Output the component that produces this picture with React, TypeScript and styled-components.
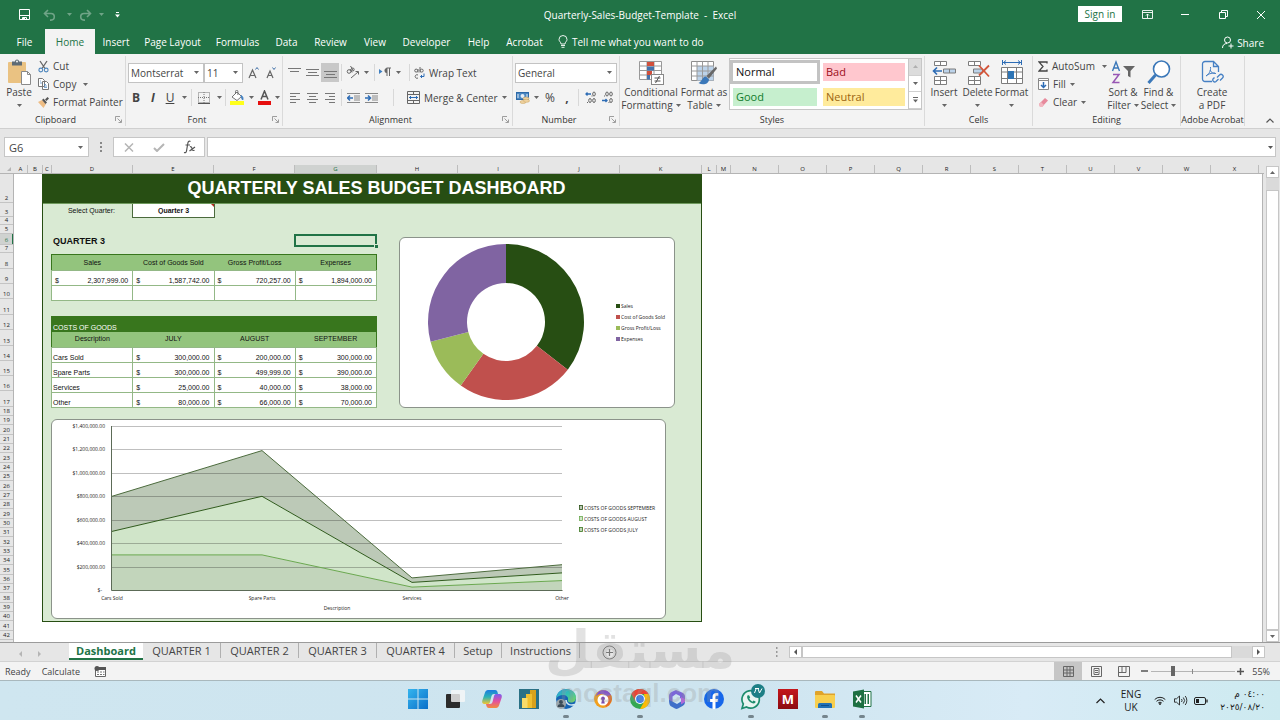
import React from "react";
import styled, { createGlobalStyle, css } from "styled-components";

const GlobalStyle = createGlobalStyle`
  *, *::before, *::after { box-sizing: border-box; }
  body { margin: 0; font-family: "Open Sans", "Noto Sans", sans-serif; font-size: 10px; color: #444; }
  button, input, select { font: inherit; color: inherit; margin: 0; padding: 0; border: 0; background: none; border-radius: 0; }
  svg { display: block; flex: none; }
  h1, h2 { margin: 0; }
`;

const App_ = styled.div`
  display: flex;
  flex-direction: column;
  min-height: 100vh;
  background: #e6e6e6;
  overflow: hidden;
`;

/* ---------- title bar ---------- */

const TitleBar = styled.header`
  display: grid;
  grid-template-columns: 1fr auto 1fr;
  align-items: center;
  height: 29px;
  background: #217346;
  color: #fff;
`;
const QuickAccess = styled.div`
  display: flex;
  align-items: center;
  padding-left: 18px;
`;
const WindowButtons = styled.div`
  display: flex;
  align-items: center;
  justify-content: flex-end;
  height: 29px;
`;
const PlainButton = styled.button<{ $w: number; $dim?: boolean }>`
  display: flex;
  align-items: center;
  justify-content: center;
  width: ${(p) => p.$w}px;
  height: 19px;
  flex: none;
  opacity: ${(p) => (p.$dim ? 0.35 : 1)};
`;
const SignIn = styled.button`
  width: 44px;
  height: 16px;
  margin-right: 6px;
  margin-bottom: 2px;
  background: #fff;
  color: #217346;
  line-height: 14px;
`;

const MenuBar = styled.nav`
  display: flex;
  align-items: stretch;
  height: 25px;
  padding-left: 4px;
  background: #217346;
  color: #fff;
`;
const MenuTab = styled.button<{ $w: number; $active?: boolean }>`
  width: ${(p) => p.$w}px;
  flex: none;
  white-space: nowrap;
  text-align: center;
  line-height: 24px;
  ${(p) => p.$active && css`background: #f3f3f3; color: #217346;`}
`;
const TellMe = styled.button`
  display: flex;
  align-items: center;
  gap: 4px;
  margin-left: 8px;
  white-space: nowrap;
`;
const Share = styled.button`
  display: flex;
  align-items: center;
  gap: 3px;
  margin: 2px 16px 0 auto;
`;

/* ---------- ribbon ---------- */

const Ribbon = styled.div`
  display: flex;
  height: 75px;
  background: #f3f3f3;
  border-bottom: 1px solid #cfcfcf;
`;
const Group = styled.section<{ $w: number; $grow?: boolean }>`
  display: flex;
  flex-direction: column;
  flex: ${(p) => (p.$grow ? 1 : 0)} 0 ${(p) => p.$w}px;
  margin: 2px 0;
  border-right: 1px solid #dadada;
`;
const GroupBody = styled.div<{ $left?: number; $gap?: number }>`
  display: flex;
  height: 58px;
  padding: 1px 0 0 ${(p) => p.$left ?? 0}px;
  gap: ${(p) => p.$gap ?? 0}px;
`;
const GroupFoot = styled.div`
  display: flex;
  align-items: center;
  height: 13px;
  font-size: 9px;
  color: #333;
`;
const GroupLabel = styled.span`
  flex: 1;
  text-align: center;
  white-space: nowrap;
`;
const Launcher = styled.button`
  width: 14px;
  height: 12px;
  display: flex;
  align-items: center;
  justify-content: center;
`;
const Stack = styled.div<{ $w?: number }>`
  display: flex;
  flex-direction: column;
  ${(p) => p.$w && `width: ${p.$w}px;`}
`;
const StackButton = styled.button`
  display: flex;
  align-items: center;
  height: 18px;
  gap: 4px;
  white-space: nowrap;
`;
const BigButton = styled.button<{ $w: number }>`
  display: flex;
  flex-direction: column;
  align-items: center;
  width: ${(p) => p.$w}px;
  flex: none;
  padding-top: 2px;
  line-height: 13px;
  white-space: nowrap;
`;
const BigIcon = styled.span`
  display: flex;
  align-items: center;
  height: 27px;
`;
const BigLine = styled.span`
  display: flex;
  align-items: center;
  gap: 3px;
  height: 13px;
`;
const Rows = styled.div`
  display: flex;
  flex-direction: column;
  gap: 6px;
  padding-top: 6px;
`;
const Row = styled.div`
  display: flex;
  align-items: center;
  height: 19px;
`;
const Tool = styled.button<{ $w: number; $on?: boolean }>`
  display: flex;
  align-items: center;
  justify-content: center;
  width: ${(p) => p.$w}px;
  height: 19px;
  flex: none;
  font-size: 12px;
  background: ${(p) => (p.$on ? "#c8c8c8" : "transparent")};
`;
const TextTool = styled.button`
  display: flex;
  align-items: center;
  height: 19px;
  gap: 4px;
  white-space: nowrap;
`;
const Rule = styled.span<{ $m?: number }>`
  width: 1px;
  height: 17px;
  margin: 0 ${(p) => p.$m ?? 3}px;
  background: #d8d8d8;
`;
const ComboBox = styled.label<{ $w: number }>`
  display: flex;
  align-items: center;
  width: ${(p) => p.$w}px;
  height: 20px;
  padding-right: 4px;
  background: #fff;
  border: 1px solid #c3c3c3;
`;
const Combo = styled.select`
  flex: 1;
  min-width: 0;
  height: 18px;
  padding-left: 2px;
  appearance: none;
  outline: none;
`;

const Gallery = styled.div`
  display: grid;
  grid-template-columns: 90px 88px 13px;
  height: 52px;
  margin-top: 1px;
  border: 1px solid #c6c6c6;
  background: #fff;
`;
const GalleryColumn = styled.div`
  display: flex;
  flex-direction: column;
  gap: 1px;
  padding-top: 1px;
`;
const Swatch = styled.button<{ $bg: string; $fg: string; $on?: boolean }>`
  height: 24px;
  padding: 0 0 0 3px;
  text-align: left;
  font-size: 11px;
  line-height: 16px;
  color: ${(p) => p.$fg};
  background: ${(p) => p.$bg} content-box;
  background-clip: padding-box;
  border: 3px solid ${(p) => (p.$on ? "#c3c3c3" : "#fff")};
`;
const GalleryScroll = styled.div`
  display: grid;
  grid-template-rows: 1fr 1fr 1fr;
  border-left: 1px solid #c6c6c6;
`;
const ScrollStep = styled.button<{ $off?: boolean }>`
  display: flex;
  align-items: center;
  justify-content: center;
  background: ${(p) => (p.$off ? "#dcdcdc" : "#fff")};
  border-bottom: 1px solid #d0d0d0;
`;
const Collapse = styled.button`
  display: flex;
  width: 36px;
  align-items: flex-end;
  padding: 0 0 5px 21px;
`;

/* ---------- formula bar ---------- */

const FormulaBar = styled.div`
  display: flex;
  align-items: center;
  height: 36px;
  padding: 0 4px;
`;
const NameBox = styled.div`
  display: flex;
  align-items: center;
  width: 85px;
  height: 20px;
  padding-right: 5px;
  background: #fff;
  border: 1px solid #c6c6c6;
`;
const NameInput = styled.input`
  flex: 1;
  min-width: 0;
  height: 18px;
  padding-left: 4px;
  font-size: 11px;
  outline: none;
`;
const FormulaDots = styled.span`
  display: flex;
  justify-content: center;
  width: 24px;
`;
const FormulaButtons = styled.div`
  display: flex;
  align-items: center;
  width: 92px;
  height: 20px;
  background: #fff;
  border: 1px solid #c6c6c6;
`;
const FormulaField = styled.div`
  display: flex;
  flex: 1;
  align-items: center;
  height: 20px;
  margin-left: 2px;
  padding-right: 2px;
  background: #fff;
  border: 1px solid #c6c6c6;
`;
const FormulaInput = styled.input`
  flex: 1;
  height: 18px;
  outline: none;
`;

/* ---------- sheet ---------- */

const SheetArea = styled.div`
  display: grid;
  grid-template-columns: minmax(0, 1fr) 16px;
  flex: 1;
`;
const Sheet = styled.main`
  display: flex;
  flex-direction: column;
`;
const ColumnHeads = styled.div`
  display: flex;
  height: 9px;
  overflow: hidden;
  border-bottom: 1px solid #b4b4b4;
`;
const ColumnHead = styled.span<{ $w: number; $on?: boolean }>`
  flex: none;
  width: ${(p) => p.$w}px;
  height: 8px;
  font-size: 6px;
  line-height: 8px;
  text-align: center;
  color: ${(p) => (p.$on ? "#217346" : "#222")};
  background: ${(p) => (p.$on ? "#cfd2d0" : "transparent")};
  border-right: 1px solid #bdbdbd;
`;
const Corner = styled.span`
  display: flex;
  width: 14px;
  flex: none;
  align-items: center;
  justify-content: flex-end;
  padding-right: 3px;
`;
const SheetBody = styled.div`
  display: flex;
  flex: 1;
  background: #fff;
  border-right: 1px solid #b4b4b4;
  margin-right: 1px;
`;
const RowHeads = styled.div`
  display: flex;
  flex-direction: column;
  width: 14px;
  flex: none;
  background: #e6e6e6;
  border-right: 1px solid #b4b4b4;
`;
const RowHead = styled.span<{ $h: number; $on?: boolean }>`
  display: flex;
  align-items: flex-end;
  justify-content: center;
  height: ${(p) => p.$h}px;
  font-size: 6px;
  line-height: 7px;
  color: ${(p) => (p.$on ? "#217346" : "#222")};
  background: ${(p) => (p.$on ? "#cfd2d0" : "transparent")};
  border-bottom: 1px solid #c4c4c4;
  ${(p) => p.$on && css`box-shadow: inset -1px 0 #217346;`}
`;

const Dashboard = styled.article`
  width: 660px;
  height: 448px;
  flex: none;
  margin-left: 28px;
  background: #d9ead3;
  border: 1px solid #274e13;
  border-top: 0;
  font-family: "Liberation Sans", Arial, sans-serif;
  font-size: 7px;
  color: #111;
`;
const Banner = styled.h1`
  height: 30px;
  padding-left: 9px;
  background: #274e13;
  border-bottom: 1px solid #6f9a5d;
  color: #fff;
  font-size: 18px;
  line-height: 29px;
  text-align: center;
`;
const Columns = styled.div`
  display: flex;
  gap: 22px;
  padding-left: 8px;
`;
const Left = styled.div`
  width: 326px;
`;
const QuarterPicker = styled.div`
  display: flex;
  height: 14px;
`;
const PickerLabel = styled.label`
  width: 81px;
  text-align: center;
  line-height: 14px;
`;
const PickerCell = styled.div`
  position: relative;
  width: 83px;
  background: #fff;
  border: 1px solid #4b6a3c;
  border-top: 0;
  &::after {
    content: "";
    position: absolute;
    top: 0;
    right: 0;
    border-top: 3px solid #b3261e;
    border-left: 3px solid transparent;
  }
`;
const Picker = styled.select`
  width: 100%;
  height: 13px;
  appearance: none;
  outline: none;
  font-weight: bold;
  text-align: center;
  text-align-last: center;
`;
const QuarterRow = styled.div`
  display: flex;
  align-items: center;
  justify-content: space-between;
  height: 13px;
  margin-top: 16px;
  margin-bottom: 7px;
`;
const QuarterTitle = styled.h2`
  padding-left: 2px;
  font-size: 9px;
  line-height: 12px;
`;
const SelectedCell = styled.div`
  position: relative;
  width: 83px;
  height: 13px;
  border: 2px solid #217346;
  &::after {
    content: "";
    position: absolute;
    right: -3px;
    bottom: -3px;
    width: 4px;
    height: 4px;
    background: #217346;
    border: solid #d9ead3;
    border-width: 1px 0 0 1px;
  }
`;
const Table = styled.table`
  width: 326px;
  table-layout: fixed;
  border-collapse: collapse;
  background: #fff;
  border: 1px solid #38761d;
  & + & { margin-top: 15px; }
`;
const Tr = styled.tr<{ $h: number }>`
  height: ${(p) => p.$h}px;
`;
const Th = styled.th`
  padding: 0;
  font-weight: normal;
  line-height: 8px;
  background: #93c47d;
`;
const Band = styled.th`
  padding: 0 1px;
  font-weight: normal;
  line-height: 8px;
  text-align: left;
  vertical-align: bottom;
  color: #fff;
  background: #38761d;
`;
const Td = styled.td`
  padding: 0 4px 0 3px;
  line-height: 8px;
  vertical-align: bottom;
  border: 1px solid #93b886;
`;
const NameTd = styled(Td)`
  padding: 0 1px;
`;
const Money = styled.span`
  display: flex;
  justify-content: space-between;
`;

const DonutCard = styled.figure`
  width: 276px;
  height: 171px;
  margin: 33px 0 0;
  background: #fff;
  border: 1px solid #8b938a;
  border-radius: 6px;
`;
const AreaCard = styled.figure`
  width: 615px;
  height: 200px;
  margin: 11px 0 0 8px;
  background: #fff;
  border: 1px solid #8b938a;
  border-radius: 6px;
`;
const ChartSvg = styled.svg`
  font-family: "Open Sans", sans-serif;
  font-size: 5px;
  fill: #222;
`;

const VScroll = styled.div`
  display: flex;
  flex-direction: column;
  width: 13px;
  margin: 1px 0 0 2px;
  background: #dadada;
`;
const ScrollButton = styled.button`
  display: flex;
  align-items: center;
  justify-content: center;
  width: 13px;
  height: 12px;
  flex: none;
  background: #fff;
  border: 1px solid #c6c6c6;
`;
const VThumb = styled.div`
  flex: 1;
  margin-top: 12px;
  background: #fff;
  border: 1px solid #c6c6c6;
`;

/* ---------- sheet tabs, status bar ---------- */

const Bottom = styled.footer`
  position: relative;
`;
const SheetTabs = styled.div`
  display: flex;
  height: 19px;
  border-top: 1px solid #9b9b9b;
  font-size: 11px;
`;
const TabNav = styled.div`
  display: flex;
  width: 69px;
  padding: 1px 0 0 11px;
`;
const SheetTab = styled.button<{ $w: number; $active?: boolean }>`
  width: ${(p) => p.$w}px;
  height: 17px;
  flex: none;
  line-height: 15px;
  white-space: nowrap;
  ${(p) =>
    p.$active
      ? css`background: #fff; color: #217346; font-weight: bold; border-bottom: 2px solid #217346;`
      : css`border-right: 1px solid #b0b0b0; height: 15px;`}
`;
const AddSheet = styled.button`
  margin-left: 22px;
  width: 16px;
  height: 18px;
  display: flex;
  align-items: center;
`;
const HScroll = styled.div`
  display: flex;
  align-items: center;
  width: 500px;
  margin-left: auto;
  margin-right: 15px;
`;
const HTrack = styled.div`
  flex: 1;
  height: 12px;
  padding-right: 20px;
  background: #dadada;
`;
const HThumb = styled.div`
  height: 12px;
  background: #fff;
  border: 1px solid #c6c6c6;
`;

const StatusBar = styled.div`
  display: flex;
  align-items: center;
  height: 20px;
  padding: 0 10px 0 5px;
  gap: 11px;
  background: #f3f3f3;
  border-top: 1px solid #d2d2d2;
  border-bottom: 1px solid #a9b8bd;
  font-size: 9px;
`;
const ViewControls = styled.div`
  display: flex;
  align-items: center;
  margin-left: auto;
`;
const ViewButton = styled.button<{ $on?: boolean }>`
  display: flex;
  align-items: center;
  justify-content: center;
  width: 28px;
  height: 18px;
  background: ${(p) => (p.$on ? "#c6c6c6" : "transparent")};
`;
const ZoomSlider = styled.input`
  width: 84px;
  height: 12px;
  appearance: none;
  outline: none;
  background: linear-gradient(#8a8a8a, #8a8a8a) 41px 50% / 1px 5px no-repeat,
    linear-gradient(#b5b5b5, #b5b5b5) 0 50% / 100% 1px no-repeat;
  &::-webkit-slider-thumb {
    appearance: none;
    width: 4px;
    height: 10px;
    background: #666;
  }
`;
const ZoomLevel = styled.span`
  width: 24px;
  text-align: right;
`;

const Watermark = styled.div`
  position: absolute;
  left: 50%;
  top: -22px;
  display: flex;
  flex-direction: column;
  align-items: center;
  width: 156px;
  margin-left: -78px;
  font-family: "DejaVu Sans", sans-serif;
  font-weight: bold;
  color: rgba(150, 150, 150, 0.28);
  pointer-events: none;
`;
const WatermarkArabic = styled.span`
  font-size: 52px;
  line-height: 60px;
`;
const WatermarkLatin = styled.span`
  font-family: "Liberation Sans", sans-serif;
  font-size: 26px;
  line-height: 26px;
`;

/* ---------- Windows taskbar ---------- */

const Taskbar = styled.div`
  display: grid;
  grid-template-columns: 1fr auto 1fr;
  height: 39px;
  background: linear-gradient(90deg, #cfe6f0 0%, #cde4ef 55%, #d8ebf6 80%, #cdeaf0 100%);
  color: #1c1c1c;
`;
const Apps = styled.div`
  display: flex;
  grid-column: 2;
  gap: 1px;
`;
const AppButton = styled.button<{ $running?: boolean }>`
  display: flex;
  flex-direction: column;
  align-items: center;
  justify-content: space-between;
  width: 36px;
  height: 37px;
  padding-top: 8px;
  &::after {
    content: "";
    width: 6px;
    height: 3px;
    border-radius: 2px;
    background: ${(p) => (p.$running ? "#75858d" : "transparent")};
  }
`;
const Tray = styled.div`
  display: flex;
  align-items: center;
  justify-content: flex-end;
  padding-right: 15px;
`;
const Language = styled.button`
  width: 36px;
  line-height: 13px;
  text-align: center;
`;
const TrayIcon = styled.span<{ $w: number }>`
  display: flex;
  justify-content: center;
  width: ${(p) => p.$w}px;
`;
const Clock = styled.time`
  width: 54px;
  font-family: "DejaVu Sans", sans-serif;
  font-size: 9px;
  line-height: 13px;
  text-align: right;
  white-space: nowrap;
`;

/* ---------- icons ---------- */

const Caret = ({ color = "#666", up }: { color?: string; up?: boolean }) => (
  <svg width="5" height="3" viewBox="0 0 5 3">
    <path d={up ? "M0 3h5L2.500 0z" : "M0 0h5L2.500 3z"} fill={color} />
  </svg>
);
const Arrow = ({ w = 12 }: { w?: number }) => (
  <Tool $w={w} aria-label="More options"><Caret /></Tool>
);
const LauncherIcon = () => (
  <Launcher aria-label="Dialog box launcher">
    <svg width="7" height="7" viewBox="0 0 7 7" fill="none" stroke="#888">
      <path d="M.5 5V.5H5M2.500 2.500 6 6M6.500 3.500v3h-3" strokeWidth=".8" />
    </svg>
  </Launcher>
);
const Foot = ({ label, launcher }: { label: string; launcher?: boolean }) => (
  <GroupFoot><GroupLabel>{label}</GroupLabel>{launcher && <LauncherIcon />}</GroupFoot>
);

/* A block of horizontal text lines, each given as [x, length]. */
const Lines = ({ rows, top = 0 }: { rows: [number, number][]; top?: number }) => (
  <svg width="13" height="12" viewBox="0 0 13 12" stroke="#777">
    {rows.map(([x, w], i) => <path key={i} d={`M${x} ${top + i * 3 + 1.5}h${w}`} strokeWidth="1" />)}
  </svg>
);

const PasteIcon = () => (
  <svg width="24" height="27" viewBox="0 0 24 27">
    <rect x="1" y="3" width="18" height="21" rx="1" fill="#eac282" />
    <path d="M5 2.500h3a2 2 0 0 1 4 0h3v4H5z" fill="#5e6b75" />
    <circle cx="10" cy="2.500" r="1" fill="#f3f3f3" />
    <path d="M14.500 12.500h6l3 3v10h-9z" fill="#fff" stroke="#8a8a8a" />
    <path d="M20.500 12.500v3h3" fill="none" stroke="#8a8a8a" />
  </svg>
);
const CutIcon = () => (
  <svg width="11" height="13" viewBox="0 0 11 13" fill="none">
    <path d="M2 1l5 7.500M9 1L4 8.500" stroke="#666" strokeWidth="1.300" />
    <circle cx="2.800" cy="10" r="1.900" stroke="#4f87bd" strokeWidth="1.100" />
    <circle cx="8.200" cy="10" r="1.900" stroke="#4f87bd" strokeWidth="1.100" />
  </svg>
);
const CopyIcon = () => (
  <svg width="11" height="12" viewBox="0 0 11 12" fill="#fff" stroke="#777">
    <path d="M.5.5h4l2 2v6h-6zM4.500 3.500h4l2 2v6h-6z" />
    <path d="M6 6.500h2M6 8h3M6 9.500h3M2 3h1M2 5h2" stroke="#5b8fc4" strokeWidth=".8" />
  </svg>
);
const PainterIcon = () => (
  <svg width="11" height="11" viewBox="0 0 11 11">
    <path d="M0 5l4-2 4 4-2.500 4z" fill="#eebd85" />
    <path d="M4 3l1.500-1.500L9 5.500 7.500 7z" fill="#555" />
    <path d="M7 2.500L9.500 0 11 1.500 8.500 4z" fill="#555" />
  </svg>
);
const BordersIcon = () => (
  <svg width="12" height="12" viewBox="0 0 12 12" fill="none" stroke="#777">
    <path d="M.5.5h11v10H.5zM6 0v11M0 5.500h12" strokeDasharray="1 1" />
    <path d="M0 11.500h12" stroke="#555" />
  </svg>
);
const FillIcon = () => (
  <svg width="14" height="15" viewBox="0 0 14 15">
    <path d="M2 7l5-5 4.500 4.500L7 10.500z" fill="#fff" stroke="#666" strokeWidth=".9" />
    <path d="M5.500 4V1.500a1.200 1.200 0 0 1 2.400 0V5" fill="none" stroke="#666" strokeWidth=".9" />
    <path d="M11 5.500c2 1 2.200 2.500 1.800 4.500-.8-.5-1.300-2-1.800-4.500z" fill="#3f7fc1" stroke="#3f7fc1" />
    <rect x="0" y="11" width="14" height="4" fill="#ffff1a" />
  </svg>
);
const FontColorIcon = () => (
  <svg width="13" height="15" viewBox="0 0 13 15">
    <path d="M3 9.500L6.500 1 10 9.500M4.200 6.500h4.600" fill="none" stroke="#555" strokeWidth="1.500" />
    <rect x="0" y="11" width="13" height="4" fill="#e60f0f" />
  </svg>
);
const GrowIcon = ({ up }: { up?: boolean }) => (
  <svg width="12" height="14" viewBox="0 0 12 14" fill="none">
    <path d={up ? "M1 12L4.500 4 8 12M2.200 9.500h4.600" : "M2 12l3-7 3 7M3 9.500h4"} stroke="#666" strokeWidth="1.200" />
    <path d={up ? "M7.500 3.500l1.500-2 1.500 2" : "M7.500 1.500l1.500 2 1.500-2"} stroke="#3f6fa8" strokeWidth="1" />
  </svg>
);
const OrientIcon = () => (
  <svg width="14" height="13" viewBox="0 0 14 13" fill="none" stroke="#666">
    <circle cx="3" cy="5.500" r="1.800" /><path d="M4 3l2 3.500" />
    <circle cx="6.700" cy="3.500" r="1.500" /><path d="M4.500 0l3 5" />
    <path d="M5 12l7-6M9.500 5.500H12.500V8.500" />
  </svg>
);
const DirectionIcon = () => (
  <svg width="12" height="11" viewBox="0 0 12 11">
    <path d="M0 2l3.500 2.500L0 7z" fill="#3f7fc1" />
    <path d="M7.500 1H12M8 1v8M10.500 1v8" stroke="#666" fill="none" />
    <path d="M8 1a2.400 2.400 0 0 0 0 5z" fill="#666" />
  </svg>
);
const IndentIcon = ({ right }: { right?: boolean }) => (
  <svg width="13" height="12" viewBox="0 0 13 12" fill="none">
    <path d="M0 1.500h13M7 4h6M7 6h6M7 8h6M0 10.500h13" stroke="#888" />
    <path d={right ? "M0 6h5M3 3.500L5.500 6 3 8.500" : "M6 6H1M3 3.500L.5 6 3 8.500"} stroke="#2d6cb5" strokeWidth="1.500" />
  </svg>
);
const WrapIcon = () => (
  <svg width="11" height="12" viewBox="0 0 11 12" fill="none" stroke="#666" strokeWidth="1">
    <circle cx="2.200" cy="3.600" r="1.500" /><path d="M4 2v3.500M6 0v5.500" />
    <circle cx="7.700" cy="3.600" r="1.500" />
    <path d="M4 8a1.800 1.800 0 1 0 0 3" />
    <path d="M10 6.500v3H6.500M8 8L6.500 9.500 8 11" stroke="#2d6cb5" />
  </svg>
);
const MergeIcon = () => (
  <svg width="13" height="13" viewBox="0 0 13 13" fill="none" stroke="#666">
    <path d="M.5.5h12v12H.5zM.5 3.500h12M.5 9.500h12M6.500.5v3M6.500 9.500v3" />
    <path d="M2 6.500h9M4 5L2.500 6.500 4 8M9 5l1.500 1.500L9 8" stroke="#2d6cb5" />
  </svg>
);
const CurrencyIcon = () => (
  <svg width="14" height="13" viewBox="0 0 14 13">
    <rect x=".5" y="1.500" width="12" height="7" fill="#4a86c0" stroke="#2e6aa8" />
    <circle cx="6.500" cy="5" r="2" fill="#e6eef7" /><path d="M2 3v4M11 3v3" stroke="#e6eef7" />
    <ellipse cx="10" cy="7.500" rx="3" ry="1.500" fill="#efd2a0" stroke="#c9a25e" strokeWidth=".5" />
    <ellipse cx="7" cy="11" rx="3" ry="1.500" fill="#efd2a0" stroke="#c9a25e" strokeWidth=".5" />
    <ellipse cx="10.500" cy="9.800" rx="3" ry="1.500" fill="#efd2a0" stroke="#c9a25e" strokeWidth=".5" />
  </svg>
);
const DecimalIcon = ({ less }: { less?: boolean }) => (
  <svg width="11" height="13" viewBox="0 0 11 13" fill="none" stroke="#666">
    <ellipse cx="9" cy="3" rx="1.300" ry="2" />
    {less && <ellipse cx="5" cy="3" rx="1.300" ry="2" />}
    <ellipse cx="9" cy="9.500" rx="1.300" ry="2" />
    {!less && <ellipse cx="5" cy="9.500" rx="1.300" ry="2" />}
    <path d={less ? "M0 9.500h5M3.500 8L5 9.500 3.500 11" : "M6 3H1M2.500 1.500L1 3l1.500 1.500"} stroke="#2d6cb5" strokeWidth="1.300" />
    <path d={less ? "M2 5h1M6.500 11.500h1" : "M6.500 5h1M2 11.500h1"} />
  </svg>
);
const ConditionalIcon = () => (
  <svg width="25" height="24" viewBox="0 0 25 24">
    <path d="M.5.5h22v18H.5zM.5 5h22M.5 9.500h22M.5 14h22M8 .5v18M15 .5v18" fill="#fff" stroke="#999" />
    <path d="M8 1h4v4H8zM8 10h5v4H8z" fill="#d1503c" /><path d="M8 5.500h7v4H8zM8 14h3v4.500H8z" fill="#4472ab" />
    <path d="M12 1h3v4h-3z" fill="#d1503c" />
    <rect x="12.500" y="13.500" width="12" height="10" fill="#fff" stroke="#888" />
    <path d="M15.500 17h6M15.500 20h6M20.500 15l-4 7" stroke="#555" />
  </svg>
);
const TableIcon = () => (
  <svg width="26" height="24" viewBox="0 0 26 24">
    <path d="M.5.5h22v19H.5z" fill="#fff" stroke="#8e8e8e" />
    <path d="M6 5h16.500v14.500H6z" fill="#bcd3ea" />
    <path d="M.5 5h22M.5 10h22M.5 15h22M6 .5v19M11.500.5v19M17 .5v19" stroke="#9a9a9a" fill="none" />
    <path d="M25 5.500L15.500 15l2.500 2.500 8-10z" fill="#686868" />
    <path d="M15 15.500c-4 0-3.500 5-7.500 6.500 4 2.500 10 1.500 10.500-3.500z" fill="#3b78b9" />
  </svg>
);
const CellsIcon = ({ kind }: { kind: "insert" | "delete" | "format" }) => (
  <svg width="24" height="26" viewBox="0 0 24 26" fill="#fff" stroke="#7d7d7d">
    {kind === "format" ? (
      <>
        <path d="M1.500 7.500h21v16h-21zM1.500 12h21M1.500 18.500h21M7.500 7.500v16M16.500 7.500v16" />
        <path d="M8 11h6v8H8z" fill="#2f75b5" stroke="none" />
        <path d="M3 2.500h18M6 .5L3.500 2.500 6 4.500M18 .5l2.500 2L18 4.500M2.500 0v5M21.500 0v5" stroke="#2d6cb5" fill="none" />
      </>
    ) : (
      <>
        <path d="M2.500 1.500h12v4h-12zM8.500 1.500v4M2.500 16.500h12v8h-12zM8.500 16.500v8M2.500 20.500h12" />
        {kind === "insert" ? (
          <>
            <path d="M11.500 9h12v4h-12zM17.500 9v4" fill="#bcd3ea" />
            <path d="M10 11H2M5 7.500L1.500 11 5 14.500" fill="none" stroke="#2d6cb5" strokeWidth="1.600" />
          </>
        ) : (
          <>
            <path d="M7.500 9h9v4h-9z" fill="#bcd3ea" />
            <path d="M13 5.500l10 11M23 5.500l-10 10" fill="none" stroke="#d2553a" strokeWidth="1.800" />
          </>
        )}
      </>
    )}
  </svg>
);
const SumIcon = () => (
  <svg width="10" height="11" viewBox="0 0 10 11" fill="none" stroke="#444" strokeWidth="1.300">
    <path d="M9 2.500V1H1l4 4.500L1 10h8V8.500" />
  </svg>
);
const FillDownIcon = () => (
  <svg width="11" height="12" viewBox="0 0 11 12" fill="none">
    <path d="M.5.5h10v11H.5zM.5 2.500h10" stroke="#888" fill="#fff" />
    <path d="M5.500 4v5.500M3 7l2.500 2.500L8 7" stroke="#2d6cb5" strokeWidth="1.500" />
  </svg>
);
const EraserIcon = () => (
  <svg width="11" height="11" viewBox="0 0 11 11">
    <path d="M1 7l6-6 3 2.500-6 6.500H2z" fill="#e78a9c" /><path d="M1 7l2-2 3 3-2 2H2z" fill="#f2b6c0" />
  </svg>
);
const SortIcon = () => (
  <svg width="25" height="25" viewBox="0 0 25 25" fill="none">
    <path d="M1.500 11L5 2l3.500 9M2.800 8h4.400" stroke="#3b78b9" strokeWidth="1.400" />
    <path d="M2 14.500h6l-6 8h6.500" stroke="#9757b5" strokeWidth="1.500" />
    <path d="M12 6h12l-4.500 5v6.500L17 16v-5z" fill="#666" />
  </svg>
);
const FindIcon = () => (
  <svg width="24" height="25" viewBox="0 0 24 25" fill="none" stroke="#3b78b9">
    <circle cx="14.500" cy="9" r="8" fill="#fff" strokeWidth="1.600" />
    <path d="M8.500 15L1.500 23" strokeWidth="3" />
  </svg>
);
const PdfIcon = () => (
  <svg width="23" height="25" viewBox="0 0 23 25" fill="none" stroke="#4680c4" strokeWidth="1.300">
    <path d="M11 21.500H4a2.500 2.500 0 0 1-2.500-2.500V4A2.500 2.500 0 0 1 4 1.500h8.500L17.500 6.500V12M12.500 1.500v5h5" />
    <path d="M5 16c3-2 5-5 4.500-9M9 10c1 2.500 3 3.500 6 3.500M5 16c2-2 5-3 9-3" strokeWidth="1" />
    <path d="M16 17.500l2.500-2.500a2 2 0 0 1 3 3L19 20.500M17.500 19l-2.500 2.500a2 2 0 0 1-3-2.500l1.500-1.500" />
  </svg>
);

/* ---------- data ---------- */

const columnHeads: [string, number][] = [
  ["A", 14], ["B", 15], ["C", 9], ["D", 81], ["E", 81], ["F", 81], ["G", 82], ["H", 81], ["I", 81],
  ["J", 81], ["K", 82], ["L", 15], ["M", 14],
  ...["N", "O", "P", "Q", "R", "S", "T", "U", "V", "W", "X"].map((c): [string, number] => [c, 48]),
];
const topRows = [29, 14, 8, 9, 11, 8, 16, 15, 15, 16, 15, 16, 15, 15, 15, 16, 9];
const rowHeights = [...topRows, ...Array.from({ length: 24 }, (_, i) => (i % 3 === 1 ? 10 : 9))];

const summary = ["2,307,999.00", "1,587,742.00", "720,257.00", "1,894,000.00"];
const costs: [string, number, number, number][] = [
  ["Cars Sold", 300000, 200000, 300000],
  ["Spare Parts", 300000, 499999, 390000],
  ["Services", 25000, 40000, 38000],
  ["Other", 80000, 66000, 70000],
];
const money = (n: number) => n.toLocaleString("en-US", { minimumFractionDigits: 2 });

const slices: [string, number, string][] = [
  ["Sales", 2307999, "#274e13"],
  ["Cost of Goods Sold", 1587742, "#c0504d"],
  ["Gross Profit/Loss", 720257, "#9bbb59"],
  ["Expenses", 1894000, "#8064a2"],
];

const Donut = () => {
  const cx = 106, cy = 84, R = 78, r = 39;
  const total = slices.reduce((s, x) => s + x[1], 0);
  let acc = 0;
  const at = (f: number, rad: number) => {
    const a = f * 2 * Math.PI;
    return `${(cx + rad * Math.sin(a)).toFixed(2)} ${(cy - rad * Math.cos(a)).toFixed(2)}`;
  };
  return (
    <ChartSvg width="274" height="169" viewBox="0 0 274 169" role="img" aria-label="Share of totals">
      {slices.map(([name, value, color], i) => {
        const from = acc / total;
        acc += value;
        const to = acc / total;
        return (
          <g key={name}>
            <path fill={color} d={`M${at(from, R)}A${R} ${R} 0 0 1 ${at(to, R)}L${at(to, r)}A${r} ${r} 0 0 0 ${at(from, r)}z`} />
            <rect x="216" y={66 + i * 11} width="4" height="4" fill={color} />
            <text x="221" y={70 + i * 11}>{name}</text>
          </g>
        );
      })}
    </ChartSvg>
  );
};

const AreaChart = () => {
  const x = (i: number) => 60 + i * 150;
  const y = (v: number) => 170 - (v / 1400000) * 164;
  const july = costs.map((c) => c[1]);
  const august = costs.map((c) => c[1] + c[2]);
  const september = costs.map((c) => c[1] + c[2] + c[3]);
  const line = (v: number[]) => v.map((n, i) => `${i ? "L" : "M"}${x(i)} ${y(n).toFixed(1)}`).join("");
  const band = (top: number[], base: number[]) =>
    line(top) + [...base].map((n, i) => [n, i]).reverse().map(([n, i]) => `L${x(i)} ${y(n).toFixed(1)}`).join("") + "z";
  const zero = [0, 0, 0, 0];
  const legend: [string, string, string][] = [
    ["COSTS OF GOODS SEPTEMBER", "#bcc9b7", "#274e13"],
    ["COSTS OF GOODS AUGUST", "#d0e5c9", "#6aa84f"],
    ["COSTS OF GOODS JULY", "#c2d5bb", "#38761d"],
  ];
  return (
    <ChartSvg width="613" height="198" viewBox="0 0 613 198" role="img" aria-label="Costs of goods by month">
      <path d={band(september, august)} fill="#bcc9b7" />
      <path d={band(august, july)} fill="#d0e5c9" />
      <path d={band(july, zero)} fill="#c2d5bb" />
      {[0, 1, 2, 3, 4, 5, 6, 7].map((k) => (
        <g key={k}>
          {k > 0 && <path d={`M60 ${Math.round(y(k * 200000)) + 0.5}h450`} stroke="#000" strokeOpacity=".25" />}
          <text x={k ? 53 : 50} y={y(k * 200000) + 2} textAnchor="end">{k ? "$" + money(k * 200000) : "$-"}</text>
        </g>
      ))}
      <path d={line(september)} fill="none" stroke="#4c6b3d" />
      <path d={line(august)} fill="none" stroke="#2f5a1c" />
      <path d={line(july)} fill="none" stroke="#6aa84f" />
      <path d="M59.500 6v164.500h451" fill="none" stroke="#5c6b57" />
      {costs.map((c, i) => <text key={c[0]} x={x(i)} y="180" textAnchor="middle">{c[0]}</text>)}
      <text x="285" y="190" textAnchor="middle">Description</text>
      {legend.map(([name, fill, stroke], i) => (
        <g key={name}>
          <rect x="527.500" y={85.5 + i * 11} width="3" height="4" fill={fill} stroke={stroke} strokeWidth=".8" />
          <text x="532" y={90 + i * 11}>{name}</text>
        </g>
      ))}
    </ChartSvg>
  );
};

/* ---------- taskbar drawings ---------- */

const appIcons: { name: string; running?: boolean; art: React.ReactNode }[] = [
  { name: "Start", art: <g><defs><linearGradient id="win" x1="0" y1="0" x2="1" y2="1"><stop offset="0" stopColor="#35b5ee" /><stop offset="1" stopColor="#0a6fc9" /></linearGradient></defs><path d="M0 0h9.500v9.500H0zM10.500 0H20v9.500h-9.500zM0 10.500h9.500V20H0zM10.500 10.500H20V20h-9.500z" fill="url(#win)" /></g> },
  { name: "Task view", art: <g><rect x="1" y="5" width="14" height="14" rx="1" fill="#2b2b2b" /><rect x="6" y="1" width="14" height="12" rx="1" fill="#f7f7f7" fillOpacity=".8" /></g> },
  { name: "Copilot", art: <g><defs><linearGradient id="cp1" x1="0" y1="0" x2="0" y2="1"><stop offset="0" stopColor="#1b7be0" /><stop offset=".5" stopColor="#2cb3b5" /><stop offset="1" stopColor="#f4c430" /></linearGradient><linearGradient id="cp2" x1="0" y1="0" x2="0" y2="1"><stop offset="0" stopColor="#7a5cf0" /><stop offset=".5" stopColor="#e24fa0" /><stop offset="1" stopColor="#f28b3c" /></linearGradient></defs><path d="M6 1h7c2 0 2.500 1.500 3 4h-4c-1.500 0-2 .7-2.500 2L8 13c-.5 1.500-1 2-2.500 2H2.500C.5 15-.2 13.500.3 11.500L3 3.500C3.500 2 4.500 1 6 1z" fill="url(#cp1)" /><path d="M14 19H7c-2 0-2.500-1.500-3-4h4c1.500 0 2-.7 2.500-2L12 7c.5-1.500 1-2 2.500-2h3c2 0 2.700 1.500 2.200 3.500L17 16.500c-.5 1.500-1.500 2.500-3 2.500z" fill="url(#cp2)" /></g> },
  { name: "Power BI", art: <g><rect width="20" height="20" fill="#2a7185" /><path d="M11 1h6v18h-6z" fill="#d9a21b" /><path d="M7 5h6v14H7z" fill="#f0c02e" /><path d="M3 9h5.500v10H3z" fill="#f7dc6a" /></g> },
  { name: "Edge", running: true, art: <g><defs><linearGradient id="edge" x1="0" y1="0" x2="1" y2="1"><stop offset="0" stopColor="#2a9be0" /><stop offset=".5" stopColor="#35c1b0" /><stop offset="1" stopColor="#7bd858" /></linearGradient></defs><circle cx="10" cy="10" r="10" fill="#1563b4" /><path d="M0 9.500C.5 4 5 0 10 0c6 0 10 4 10 8.500 0 3-2 5-5 5-2.500 0-3.500-1-3-2.500.8-3-2-5-5-5C4 6 1.500 7.500 0 9.500z" fill="url(#edge)" /><path d="M10 11c0 4 4 6 9 4.500" stroke="#d0e6f2" fill="none" strokeWidth="1.500" /><circle cx="5" cy="15" r="5" fill="#9aa4aa" /><circle cx="5" cy="13" r="2" fill="#3a4a55" /><path d="M1.500 18a3.500 3 0 0 1 7 0z" fill="#3a4a55" /></g> },
  { name: "Secure browser", art: <g><circle cx="10" cy="10" r="9" fill="#f2a01e" /><path d="M10 1a9 9 0 0 1 8 5L14 9c-2-5-7-5-11-2 1-4 4-6 7-6z" fill="#8455c7" /><path d="M18 6a9 9 0 0 1-5 12l-1-3c3-2 4-5 2-8z" fill="#e36a2c" /><circle cx="10" cy="11" r="5.500" fill="#fff" /><path d="M10 7.500a2 2 0 0 1 1 3.700l.8 3.300H8.200l.8-3.300a2 2 0 0 1 1-3.700z" fill="#7a4bb0" /></g> },
  { name: "Chrome", running: true, art: <g><circle cx="10" cy="10" r="10" fill="#34a853" /><path d="M1.340 5A10 10 0 0 1 18.660 5H10a5 5 0 0 0-4.330 7.500z" fill="#ea4335" /><path d="M18.660 5A10 10 0 0 1 10 20l4.330-7.500A5 5 0 0 0 14.300 7.500L14 5z" fill="#fbbc04" /><circle cx="10" cy="10" r="5" fill="#fff" /><circle cx="10" cy="10" r="3.900" fill="#3b7ded" /></g> },
  { name: "Microsoft 365", art: <g><path d="M9 1l6 2.500c2 1 3 2 3 4V12l-5-3V7L9 5 5.500 7.500V14L2 12V7c0-2 1-3 2.500-4z" fill="#7b67d8" /><path d="M5.500 12.500L10 15l4-2.500 4-3V13c0 2-1 3-2.500 4L11 19.500c-1 .5-2 .5-3 0L3.500 17C2.500 16 2 14 2 11z" fill="#3f6fc9" /><path d="M14 8l4 2v3l-4 2.500z" fill="#b06ad8" /></g> },
  { name: "Facebook", art: <g><circle cx="10" cy="10" r="10" fill="#1767ea" /><path d="M8.500 20v-7H6v-3h2.500V8c0-2.700 1.500-4 3.800-4 1 0 1.700.1 2 .2v2.500h-1.300c-1.200 0-1.500.6-1.500 1.600V10H14l-.5 3h-2v7z" fill="#fff" /></g> },
  { name: "WhatsApp", running: true, art: <g><path d="M1 19.500l1.300-4.500A8.700 8.700 0 1 1 5.500 18z" fill="#e9f5f1" stroke="#1c8c6c" strokeWidth="1.700" /><path d="M6.500 6.500c-1.500 2 1.500 7.500 6 8 1.500 0 2.300-1.200 2-2l-2-1-1 1.200c-1.500-.5-2.700-1.800-3.200-3.100L9.200 8.500l-1-2c-.5-.5-1.200-.5-1.700 0z" fill="#1c8c6c" /><circle cx="17" cy="2" r="7" fill="#1d7f86" /><path d="M14-.5h4M15 .0l-1.500 4M17-.5l1.500 4.500L21-.5" stroke="#fff" fill="none" strokeWidth="1" /></g> },
  { name: "M", art: <g><defs><linearGradient id="mred" x1="0" y1="0" x2="0" y2="1"><stop offset="0" stopColor="#c4171b" /><stop offset="1" stopColor="#8c0b10" /></linearGradient></defs><rect width="20" height="20" fill="url(#mred)" /><text x="10" y="15" textAnchor="middle" fontSize="13" fontWeight="bold" fill="#fff">M</text></g> },
  { name: "File Explorer", running: true, art: <g><path d="M0 3a1 1 0 0 1 1-1h6l2 2.500H20V10H0z" fill="#e0a32a" /><path d="M0 6h19a1 1 0 0 1 1 1v11a1 1 0 0 1-1 1H1a1 1 0 0 1-1-1z" fill="#f8cf4e" /><path d="M3 19v-3.500A1.500 1.500 0 0 1 4.500 14h11a1.500 1.500 0 0 1 1.500 1.500V19z" fill="#2271b5" /><path d="M6 16.500h8" stroke="#0f4f8c" /></g> },
  { name: "Excel", running: true, art: <g><path d="M10 2.500h9v15h-9z" fill="#fff" stroke="#217346" /><path d="M12.500 5h1.500v10h-1.500zM15.500 5H17v10h-1.500z" fill="#217346" /><path d="M1 2.500L12 .5v19L1 17.500z" fill="#1d6f42" /><path d="M4 6.500l5 7M9 6.500l-5 7" stroke="#fff" strokeWidth="1.500" fill="none" /></g> },
];

const menu: [string, number][] = [
  ["File", 41], ["Home", 50], ["Insert", 42], ["Page Layout", 71], ["Formulas", 59], ["Data", 39],
  ["Review", 49], ["View", 40], ["Developer", 63], ["Help", 41], ["Acrobat", 51],
];

export default function App() {
  return (
    <App_>
      <GlobalStyle />
      <TitleBar>
        <QuickAccess>
          <PlainButton $w={13} aria-label="Save">
            <svg width="11" height="11" viewBox="0 0 11 11" fill="none" stroke="#fff"><path d="M.5.5h10v10H.5zM1 6.500h9M3.500 10.500v-2h4v2" /><path d="M4 9h2v2H4z" fill="#fff" stroke="none" /></svg>
          </PlainButton>
          <PlainButton $w={36} $dim aria-label="Undo">
            <svg width="13" height="12" viewBox="0 0 13 12" fill="none" stroke="#fff" strokeWidth="1.600"><path d="M5 1L1.500 4.500 5 8M2 4.500h6a3.300 3.300 0 0 1 0 6.600H7" /></svg>
          </PlainButton>
          <PlainButton $w={-0 || 5} $dim aria-label="Undo history"><Caret color="#fff" /></PlainButton>
          <PlainButton $w={26} $dim aria-label="Redo">
            <svg width="13" height="12" viewBox="0 0 13 12" fill="none" stroke="#fff" strokeWidth="1.600"><path d="M8 1l3.500 3.500L8 8M11 4.500H5a3.300 3.300 0 0 0 0 6.600h1" /></svg>
          </PlainButton>
          <PlainButton $w={6} $dim aria-label="Redo history"><Caret color="#fff" /></PlainButton>
          <PlainButton $w={26} aria-label="Customize toolbar">
            <svg width="5" height="6" viewBox="0 0 5 6" fill="#fff"><path d="M1 0h3v1H1zM0 2.500h5L2.500 5.500z" /></svg>
          </PlainButton>
        </QuickAccess>
        <span>Quarterly-Sales-Budget-Template&nbsp; -&nbsp; Excel</span>
        <WindowButtons>
          <SignIn>Sign in</SignIn>
          <PlainButton $w={38} aria-label="Ribbon display options">
            <svg width="11" height="9" viewBox="0 0 11 9" fill="none" stroke="#fff"><path d="M.5.5h10v8H.5zM.5 2.500h10M5.500 8V4M4 5.500L5.500 4 7 5.500" strokeWidth=".9" /></svg>
          </PlainButton>
          <PlainButton $w={38} aria-label="Minimize"><svg width="8" height="1"><path d="M0 .5h8" stroke="#fff" /></svg></PlainButton>
          <PlainButton $w={38} aria-label="Restore">
            <svg width="9" height="9" viewBox="0 0 9 9" fill="none" stroke="#fff"><path d="M.5 2.500h6v6h-6zM2.500 2.500v-2h6v6h-2" /></svg>
          </PlainButton>
          <PlainButton $w={38} aria-label="Close">
            <svg width="10" height="10" viewBox="0 0 10 10" stroke="#fff"><path d="M1 1l8 8M9 1L1 9" /></svg>
          </PlainButton>
        </WindowButtons>
      </TitleBar>

      <MenuBar>
        {menu.map(([name, w]) => <MenuTab key={name} $w={w} $active={name === "Home"}>{name}</MenuTab>)}
        <TellMe>
          <svg width="10" height="13" viewBox="0 0 10 13" fill="none" stroke="#fff"><path d="M3 9C3 7 1 6.500 1 4.500a4 4 0 0 1 8 0C9 6.500 7 7 7 9zM3 10.500h4M3.500 12.300h3" strokeWidth=".9" /></svg>
          Tell me what you want to do
        </TellMe>
        <Share>
          <svg width="12" height="13" viewBox="0 0 12 13" fill="none" stroke="#fff"><circle cx="5.500" cy="4" r="3" /><path d="M.5 12c0-3 2-4.500 4.500-4.500M9 7.500v5M6.500 10h5" /></svg>
          Share
        </Share>
      </MenuBar>

      <Ribbon>
        <Group $w={126}>
          <GroupBody>
            <BigButton $w={38}>
              <BigIcon><PasteIcon /></BigIcon><BigLine>Paste</BigLine><BigLine><Caret /></BigLine>
            </BigButton>
            <Stack>
              <StackButton><CutIcon />Cut</StackButton>
              <StackButton><CopyIcon />Copy&nbsp; <Caret /></StackButton>
              <StackButton><PainterIcon />Format Painter</StackButton>
            </Stack>
          </GroupBody>
          <Foot label="Clipboard" launcher />
        </Group>

        <Group $w={156}>
          <GroupBody $left={2}>
            <Rows>
              <Row>
                <ComboBox $w={76}><Combo aria-label="Font"><option>Montserrat</option></Combo><Caret /></ComboBox>
                <ComboBox $w={39}><Combo aria-label="Font size"><option>11</option></Combo><Caret /></ComboBox>
                <Tool $w={22} aria-label="Increase font size"><GrowIcon up /></Tool>
                <Tool $w={12} aria-label="Decrease font size"><GrowIcon /></Tool>
              </Row>
              <Row>
                <Tool $w={16}><b>B</b></Tool>
                <Tool $w={18}><b><i>I</i></b></Tool>
                <Tool $w={16}><u>U</u></Tool>
                <Arrow />
                <Rule $m={1} />
                <Tool $w={22} aria-label="Borders"><BordersIcon /></Tool>
                <Arrow w={8} />
                <Rule $m={2} />
                <Tool $w={18} aria-label="Fill color"><FillIcon /></Tool>
                <Arrow w={10} />
                <Tool $w={16} aria-label="Font color"><FontColorIcon /></Tool>
                <Arrow w={10} />
              </Row>
            </Rows>
          </GroupBody>
          <Foot label="Font" launcher />
        </Group>

        <Group $w={230}>
          <GroupBody $left={2}>
            <Rows>
              <Row>
                <Tool $w={18} aria-label="Top align"><Lines rows={[[0, 13], [2, 9]]} /></Tool>
                <Tool $w={18} aria-label="Middle align"><Lines top={1} rows={[[0, 13], [2, 9], [0, 13]]} /></Tool>
                <Tool $w={18} $on aria-label="Bottom align"><Lines top={3} rows={[[0, 13], [2, 9], [0, 13]]} /></Tool>
                <Rule $m={2} />
                <Tool $w={18} aria-label="Orientation"><OrientIcon /></Tool>
                <Arrow w={8} />
                <Rule $m={4} />
                <Tool $w={12} aria-label="Text direction"><DirectionIcon /></Tool>
                <Arrow w={14} />
                <Rule $m={4} />
                <TextTool><WrapIcon />Wrap Text</TextTool>
              </Row>
              <Row>
                <Tool $w={18} aria-label="Align left"><Lines rows={[[2, 10], [2, 6], [2, 10], [2, 6]]} /></Tool>
                <Tool $w={18} aria-label="Center"><Lines rows={[[1, 11], [3, 7], [1, 11], [3, 7]]} /></Tool>
                <Tool $w={18} aria-label="Align right"><Lines rows={[[1, 10], [5, 6], [1, 10], [5, 6]]} /></Tool>
                <Rule $m={2} />
                <Tool $w={18} aria-label="Decrease indent"><IndentIcon /></Tool>
                <Tool $w={18} aria-label="Increase indent"><IndentIcon right /></Tool>
                <Rule $m={13} />
                <TextTool><MergeIcon />Merge &amp; Center <Caret /></TextTool>
              </Row>
            </Rows>
          </GroupBody>
          <Foot label="Alignment" launcher />
        </Group>

        <Group $w={107}>
          <GroupBody $left={2}>
            <Rows>
              <Row><ComboBox $w={102}><Combo aria-label="Number format"><option>General</option></Combo><Caret /></ComboBox></Row>
              <Row>
                <Tool $w={16} aria-label="Accounting format"><CurrencyIcon /></Tool>
                <Arrow w={10} />
                <Tool $w={18}>%</Tool>
                <Tool $w={16}><b>,</b></Tool>
                <Rule $m={3} />
                <Tool $w={16} aria-label="Increase decimal"><DecimalIcon /></Tool>
                <Tool $w={18} aria-label="Decrease decimal"><DecimalIcon less /></Tool>
              </Row>
            </Rows>
          </GroupBody>
          <Foot label="Number" launcher />
        </Group>

        <Group $w={305} $grow>
          <GroupBody $left={3}>
            <BigButton $w={56}>
              <BigIcon><ConditionalIcon /></BigIcon><BigLine>Conditional</BigLine><BigLine>Formatting <Caret /></BigLine>
            </BigButton>
            <BigButton $w={50}>
              <BigIcon><TableIcon /></BigIcon><BigLine>Format as</BigLine><BigLine>Table <Caret /></BigLine>
            </BigButton>
            <Gallery>
              <GalleryColumn>
                <Swatch $bg="#fff" $fg="#111" $on>Normal</Swatch>
                <Swatch $bg="#c6efce" $fg="#107c2c">Good</Swatch>
              </GalleryColumn>
              <GalleryColumn>
                <Swatch $bg="#ffc7ce" $fg="#9c0f1a">Bad</Swatch>
                <Swatch $bg="#ffeb9c" $fg="#9c6510">Neutral</Swatch>
              </GalleryColumn>
              <GalleryScroll>
                <ScrollStep $off aria-label="Scroll up"><Caret up color="#b0b0b0" /></ScrollStep>
                <ScrollStep aria-label="Scroll down"><Caret /></ScrollStep>
                <ScrollStep aria-label="More styles"><svg width="5" height="6" viewBox="0 0 5 6" fill="#666"><path d="M0 0h5v1H0zM0 2.500h5L2.500 5.500z" /></svg></ScrollStep>
              </GalleryScroll>
            </Gallery>
          </GroupBody>
          <Foot label="Styles" />
        </Group>

        <Group $w={108}>
          <GroupBody $left={2}>
            <BigButton $w={34}><BigIcon><CellsIcon kind="insert" /></BigIcon><BigLine>Insert</BigLine><BigLine><Caret /></BigLine></BigButton>
            <BigButton $w={33}><BigIcon><CellsIcon kind="delete" /></BigIcon><BigLine>Delete</BigLine><BigLine><Caret /></BigLine></BigButton>
            <BigButton $w={35}><BigIcon><CellsIcon kind="format" /></BigIcon><BigLine>Format</BigLine><BigLine><Caret /></BigLine></BigButton>
          </GroupBody>
          <Foot label="Cells" />
        </Group>

        <Group $w={148}>
          <GroupBody $left={5}>
            <Stack $w={67}>
              <StackButton><SumIcon />AutoSum&nbsp; <Caret /></StackButton>
              <StackButton><FillDownIcon />Fill <Caret /></StackButton>
              <StackButton><EraserIcon />Clear <Caret /></StackButton>
            </Stack>
            <BigButton $w={36}><BigIcon><SortIcon /></BigIcon><BigLine>Sort &amp;</BigLine><BigLine>Filter <Caret /></BigLine></BigButton>
            <BigButton $w={35}><BigIcon><FindIcon /></BigIcon><BigLine>Find &amp;</BigLine><BigLine>Select <Caret /></BigLine></BigButton>
          </GroupBody>
          <Foot label="Editing" />
        </Group>

        <Group $w={64}>
          <GroupBody>
            <BigButton $w={62}><BigIcon><PdfIcon /></BigIcon><BigLine>Create</BigLine><BigLine>a PDF</BigLine></BigButton>
          </GroupBody>
          <Foot label="Adobe Acrobat" />
        </Group>
        <Collapse aria-label="Collapse the ribbon">
          <svg width="8" height="5" viewBox="0 0 8 5" fill="none" stroke="#555"><path d="M.5 4.500L4 1l3.500 3.500" strokeWidth="1.200" /></svg>
        </Collapse>
      </Ribbon>

      <FormulaBar>
        <NameBox><NameInput aria-label="Name box" defaultValue="G6" /><Caret /></NameBox>
        <FormulaDots><svg width="2" height="11" fill="#888"><path d="M0 0h2v2H0zM0 4h2v2H0zM0 8h2v2H0z" /></svg></FormulaDots>
        <FormulaButtons>
          <PlainButton $w={30} aria-label="Cancel"><svg width="10" height="9" viewBox="0 0 10 9" stroke="#b5b5b5" strokeWidth="1.500"><path d="M1 .5l8 8M9 .5l-8 8" /></svg></PlainButton>
          <PlainButton $w={30} aria-label="Enter"><svg width="12" height="9" viewBox="0 0 12 9" fill="none" stroke="#b5b5b5" strokeWidth="2"><path d="M1 5l3 3L11 1" /></svg></PlainButton>
          <PlainButton $w={30} aria-label="Insert function">
            <svg width="13" height="14" viewBox="0 0 13 14" fill="none" stroke="#555" strokeWidth="1.200"><path d="M7.500 1.500C5.500.5 5 2 4.700 4L3.500 11c-.3 1.500-1 2-2.500 1.500M2.500 5h4.500M7 7c1-.8 1.600 0 2 1.500.5 1.800 1 2.500 2.500 1.700M12 7L6.500 11" /></svg>
          </PlainButton>
        </FormulaButtons>
        <FormulaField><FormulaInput aria-label="Formula" /><Caret color="#555" /></FormulaField>
      </FormulaBar>

      <SheetArea>
        <Sheet>
          <ColumnHeads>
            <Corner><svg width="4" height="4"><path d="M4 0v4H0z" fill="#b4b4b4" /></svg></Corner>
            {columnHeads.map(([c, w]) => <ColumnHead key={c} $w={w} $on={c === "G"}>{c}</ColumnHead>)}
          </ColumnHeads>
          <SheetBody>
            <RowHeads>
              {rowHeights.map((h, i) => <RowHead key={i} $h={h} $on={i === 4}>{i + 2}</RowHead>)}
            </RowHeads>
            <Dashboard>
              <Banner>QUARTERLY SALES BUDGET DASHBOARD</Banner>
              <Columns>
                <Left>
                  <QuarterPicker>
                    <PickerLabel htmlFor="quarter">Select Quarter:</PickerLabel>
                    <PickerCell><Picker id="quarter"><option>Quarter 3</option></Picker></PickerCell>
                  </QuarterPicker>
                  <QuarterRow>
                    <QuarterTitle>QUARTER 3</QuarterTitle>
                    <SelectedCell />
                  </QuarterRow>
                  <Table>
                    <thead>
                      <Tr $h={16}>{["Sales", "Cost of Goods Sold", "Gross Profit/Loss", "Expenses"].map((t) => <Th key={t}>{t}</Th>)}</Tr>
                    </thead>
                    <tbody>
                      <Tr $h={15}>{summary.map((v) => <Td key={v}><Money><span>$</span><span>{v}</span></Money></Td>)}</Tr>
                      <Tr $h={15}><Td /><Td /><Td /><Td /></Tr>
                    </tbody>
                  </Table>
                  <Table>
                    <thead>
                      <Tr $h={15}><Band colSpan={4}>COSTS OF GOODS</Band></Tr>
                      <Tr $h={16}>{["Description", "JULY", "AUGUST", "SEPTEMBER"].map((t) => <Th key={t}>{t}</Th>)}</Tr>
                    </thead>
                    <tbody>
                      {costs.map(([name, ...values]) => (
                        <Tr $h={15} key={name}>
                          <NameTd>{name}</NameTd>
                          {values.map((v, i) => <Td key={i}><Money><span>$</span><span>{money(v)}</span></Money></Td>)}
                        </Tr>
                      ))}
                    </tbody>
                  </Table>
                </Left>
                <DonutCard><Donut /></DonutCard>
              </Columns>
              <AreaCard><AreaChart /></AreaCard>
            </Dashboard>
          </SheetBody>
        </Sheet>
        <VScroll>
          <ScrollButton aria-label="Scroll up"><Caret up /></ScrollButton>
          <VThumb />
          <ScrollButton aria-label="Scroll down"><Caret /></ScrollButton>
        </VScroll>
      </SheetArea>

      <Bottom>
        <SheetTabs>
          <TabNav>
            <PlainButton $w={19} aria-label="Previous sheet"><svg width="3" height="6"><path d="M3 0v6L0 3z" fill="#b5b5b5" /></svg></PlainButton>
            <PlainButton $w={19} aria-label="Next sheet"><svg width="3" height="6"><path d="M0 0v6l3-3z" fill="#b5b5b5" /></svg></PlainButton>
          </TabNav>
          <SheetTab $w={74} $active>Dashboard</SheetTab>
          <SheetTab $w={78}>QUARTER 1</SheetTab>
          <SheetTab $w={78}>QUARTER 2</SheetTab>
          <SheetTab $w={78}>QUARTER 3</SheetTab>
          <SheetTab $w={78}>QUARTER 4</SheetTab>
          <SheetTab $w={47}>Setup</SheetTab>
          <SheetTab $w={78}>Instructions</SheetTab>
          <AddSheet aria-label="New sheet">
            <svg width="15" height="15" viewBox="0 0 15 15" fill="none" stroke="#777"><circle cx="7.500" cy="7.500" r="6.500" /><path d="M7.500 4v7M4 7.500h7" strokeWidth="1.200" /></svg>
          </AddSheet>
          <HScroll>
            <FormulaDots as="span"><svg width="2" height="10" fill="#999"><path d="M0 0h1.500v2H0zM0 4h1.500v2H0zM0 8h1.500v2H0z" /></svg></FormulaDots>
            <ScrollButton aria-label="Scroll left"><svg width="3" height="6"><path d="M3 0v6L0 3z" fill="#555" /></svg></ScrollButton>
            <HTrack><HThumb /></HTrack>
            <ScrollButton aria-label="Scroll right"><svg width="3" height="6"><path d="M0 0v6l3-3z" fill="#555" /></svg></ScrollButton>
          </HScroll>
        </SheetTabs>
        <StatusBar>
          <span>Ready</span>
          <span>Calculate</span>
          <svg width="16" height="11" viewBox="0 0 16 11"><path d="M4.500 1.500h10v9h-10z" fill="#fff" stroke="#666" /><path d="M8 1h7v3H8z" fill="#555" /><circle cx="6" cy="2.500" r="2.500" fill="#555" /><path d="M6 6h2M9 6h2M12 6h1.500M6 8.500h2M9 8.500h2M12 8.500h1.500" stroke="#777" /></svg>
          <ViewControls>
            <ViewButton $on aria-label="Normal view"><svg width="11" height="11" viewBox="0 0 11 11" fill="none" stroke="#666"><path d="M.5.5h10v10H.5zM.5 4h10M.5 7h10M4 .5v10M7 .5v10" /></svg></ViewButton>
            <ViewButton aria-label="Page layout view"><svg width="11" height="11" viewBox="0 0 11 11" fill="none" stroke="#666"><path d="M.5.5h10v10H.5zM3 2.500h5v6H3zM4 4.500h3M4 6.500h3" /></svg></ViewButton>
            <ViewButton aria-label="Page break view"><svg width="12" height="11" viewBox="0 0 12 11" fill="none" stroke="#666"><path d="M.5.5h11v10H.5zM4 .5v6h4v-6M.5 6.500H4" /></svg></ViewButton>
            <PlainButton $w={13} aria-label="Zoom out"><svg width="7" height="2"><path d="M0 1h7" stroke="#555" strokeWidth="1.500" /></svg></PlainButton>
            <ZoomSlider type="range" aria-label="Zoom" min={10} max={190} defaultValue={55} />
            <PlainButton $w={11} aria-label="Zoom in"><svg width="7" height="7"><path d="M0 3.500h7M3.500 0v7" stroke="#555" strokeWidth="1.500" /></svg></PlainButton>
            <ZoomLevel>55%</ZoomLevel>
          </ViewControls>
        </StatusBar>
        <Taskbar>
          <Apps>
            {appIcons.map((a) => (
              <AppButton key={a.name} $running={a.running} aria-label={a.name}>
                <svg width="20" height="20" viewBox="0 0 20 20" overflow="visible">{a.art}</svg>
              </AppButton>
            ))}
          </Apps>
          <Tray>
            <TrayIcon $w={26}><svg width="9" height="6" viewBox="0 0 9 6" fill="none" stroke="#222"><path d="M.5 5L4.500 1l4 4" strokeWidth="1.200" /></svg></TrayIcon>
            <Language>ENG<br />UK</Language>
            <TrayIcon $w={22}><svg width="12" height="9" viewBox="0 0 12 9" fill="none" stroke="#222"><path d="M.7 3.500a7.500 7.500 0 0 1 10.600 0M2.500 5.300a5 5 0 0 1 7 0M4.200 7a2.600 2.600 0 0 1 3.600 0" /><circle cx="6" cy="8" r="1" fill="#222" stroke="none" /></svg></TrayIcon>
            <TrayIcon $w={20}><svg width="14" height="11" viewBox="0 0 14 11" fill="none" stroke="#222"><path d="M.5 3.800h2L5.500 1v9l-3-2.800h-2zM7.500 4a2.500 2.500 0 0 1 0 3M9.300 2.500a4.500 4.500 0 0 1 0 6M11.200 1a7 7 0 0 1 0 9" strokeWidth=".9" /></svg></TrayIcon>
            <TrayIcon $w={20}><svg width="14" height="8" viewBox="0 0 14 8" fill="none" stroke="#222"><rect x=".5" y=".5" width="11" height="7" rx="1.500" /><path d="M2 2h3v4H2z" fill="#222" stroke="none" /><path d="M13 2.500v3" strokeWidth="1.300" /></svg></TrayIcon>
            <Clock><bdi dir="rtl">٠٤:٠٠ م</bdi><br />٢٠٢٥/٠٨/٢٠</Clock>
          </Tray>
        </Taskbar>
        <Watermark aria-hidden="true">
          <WatermarkArabic lang="ar">مستقل</WatermarkArabic>
          <WatermarkLatin>mostaql.com</WatermarkLatin>
        </Watermark>
      </Bottom>
    </App_>
  );
}
